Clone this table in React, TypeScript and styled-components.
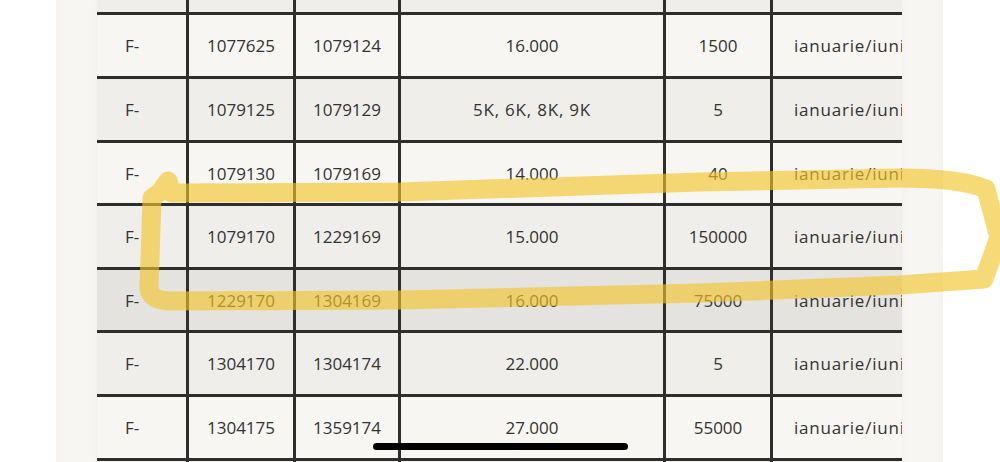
import styled, { createGlobalStyle } from 'styled-components';

const GlobalStyle = createGlobalStyle`
  html, body {
    margin: 0;
    padding: 0;
    background: #ffffff;
  }
  body {
    font-family: 'Open Sans', 'Liberation Sans', sans-serif;
  }
`;

const Page = styled.div`
  position: relative;
  width: 1000px;
  height: 462px;
  overflow: hidden;
  display: flex;
  padding-left: 56px;
  box-sizing: border-box;
`;

const Panel = styled.div`
  width: 887px;
  height: 100%;
  padding: 0 41px;
  box-sizing: border-box;
  background: linear-gradient(90deg, #f4f3ee 0px, #f7f6f2 8px, #f7f6f2 calc(100% - 8px), #f4f3ee 100%);
`;

const Table = styled.div`
  width: 805px;
  height: 100%;
  overflow: hidden;
  display: flex;
  flex-direction: column;
  box-shadow: 0 0 10px rgba(0, 0, 0, 0.04);
`;

const rowBg = {
  light: '#f7f6f2',
  gray: '#efeeea',
  dark: '#e4e3df',
};

const Row = styled.div<{ $tone: keyof typeof rowBg; $top?: boolean; $h: number }>`
  flex: none;
  display: grid;
  grid-template-columns: 89px 107px 105px 265px 107px 1fr;
  height: ${(p) => p.$h}px;
  box-sizing: border-box;
  border-top: ${(p) => (p.$top ? 'none' : '3px solid #2e2e2e')};
  background: ${(p) => rowBg[p.$tone]};
`;

const Cell = styled.div<{ $align?: 'left' | 'center'; $pad?: number; $first?: boolean; $wide?: boolean }>`
  display: flex;
  align-items: center;
  justify-content: ${(p) => (p.$align === 'left' ? 'flex-start' : 'center')};
  padding-left: ${(p) => p.$pad ?? 0}px;
  border-left: ${(p) => (p.$first ? 'none' : '3px solid #2e2e2e')};
  font-size: 17px;
  letter-spacing: ${(p) => (p.$wide ? '0.8px' : '0')};
  color: #333333;
  white-space: nowrap;
  overflow: hidden;
  min-width: 0;
`;

const HomeBar = styled.div`
  position: absolute;
  left: 373px;
  top: 443px;
  width: 255px;
  height: 7px;
  border-radius: 4px;
  background: #000000;
`;

const Marker = styled.svg`
  position: absolute;
  left: 0;
  top: 0;
  pointer-events: none;
`;

type Entry = {
  from: string;
  to: string;
  value: string;
  qty: string;
  tone: keyof typeof rowBg;
};

const rows: Entry[] = [
  { from: '1077625', to: '1079124', value: '16.000', qty: '1500', tone: 'light' },
  { from: '1079125', to: '1079129', value: '5K, 6K, 8K, 9K', qty: '5', tone: 'gray' },
  { from: '1079130', to: '1079169', value: '14.000', qty: '40', tone: 'light' },
  { from: '1079170', to: '1229169', value: '15.000', qty: '150000', tone: 'gray' },
  { from: '1229170', to: '1304169', value: '16.000', qty: '75000', tone: 'dark' },
  { from: '1304170', to: '1304174', value: '22.000', qty: '5', tone: 'gray' },
  { from: '1304175', to: '1359174', value: '27.000', qty: '55000', tone: 'light' },
];

function TableRow({ r, h }: { r: Entry; h: number }) {
  return (
    <Row $tone={r.tone} $h={h}>
      <Cell $first $align="left" $pad={28}>F-</Cell>
      <Cell>{r.from}</Cell>
      <Cell>{r.to}</Cell>
      <Cell $wide={r.value.includes('K')}>{r.value}</Cell>
      <Cell>{r.qty}</Cell>
      <Cell $align="left" $pad={21} $wide>ianuarie/iunie 2023</Cell>
    </Row>
  );
}

function EmptyRow({ top, h }: { top?: boolean; h: number }) {
  return (
    <Row $tone="gray" $top={top} $h={h}>
      <Cell $first />
      <Cell />
      <Cell />
      <Cell />
      <Cell />
      <Cell />
    </Row>
  );
}

export default function App() {
  const heights = [64, 64, 63, 64, 63, 64, 64];
  return (
    <Page>
      <GlobalStyle />
      <Panel>
        <Table>
          <EmptyRow top h={12} />
          {rows.map((r, i) => (
            <TableRow key={r.from} r={r} h={heights[i]} />
          ))}
          <EmptyRow h={20} />
        </Table>
      </Panel>

      {/* highlighter scribble */}
      <Marker width="1000" height="462" viewBox="0 0 1000 462">
        <g
          fill="none"
          stroke="#f2c52c"
          strokeOpacity="0.64"
          strokeWidth="19"
          strokeLinecap="round"
          strokeLinejoin="round"
        >
          <path d="M998 234 L986 189 Q960 178 900 178 L700 182 L400 192 L172 193 L168 181 L160 192 L152 198 L149 288 Q150 300 168 301 L400 300 L700 293 L900 285 L984 279 L998 240" />
        </g>
      </Marker>

      <HomeBar />
    </Page>
  );
}
